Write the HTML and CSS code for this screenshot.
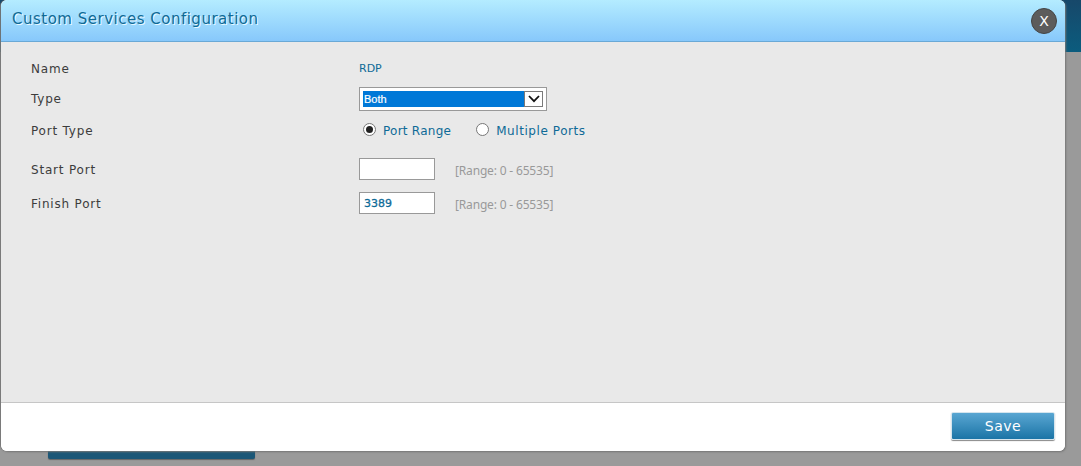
FILE: index.html
```html
<!DOCTYPE html>
<html lang="en">
<head>
<meta charset="utf-8">
<title>Custom Services Configuration</title>
<link rel="stylesheet" href="styles.css">
</head>
<body>
<div class="backdrop">
  <div class="behind-strip"></div>
  <div class="behind-button"></div>
  <div class="modal">
    <header class="modal-head">
      <h1 class="modal-title">Custom Services Configuration</h1>
      <span class="close">X</span>
    </header>
    <main class="modal-body">
      <div class="row row-name"><span class="label">Name</span><span class="value value-name">RDP</span></div>
      <div class="row row-type"><span class="label">Type</span>
        <div class="select"><span class="select-text">Both</span><span class="select-btn"><svg width="12" height="8" viewBox="0 0 12 8"><path d="M1 1l5 5.200L11 1" fill="none" stroke="#111" stroke-width="1.800"/></svg></span></div>
      </div>
      <div class="row row-port"><span class="label">Port Type</span>
        <div class="radios">
          <span class="radio radio-on"></span><span class="value radio-label radio-label-first">Port Range</span>
          <span class="radio"></span><span class="value radio-label">Multiple Ports</span>
        </div>
      </div>
      <div class="row row-start"><span class="label">Start Port</span><span class="input"></span><span class="hint">[Range: 0 - 65535]</span></div>
      <div class="row row-finish"><span class="label">Finish Port</span><span class="input">3389</span><span class="hint">[Range: 0 - 65535]</span></div>
    </main>
    <footer class="modal-foot"><button class="save" type="button">Save</button></footer>
  </div>
</div>
</body>
</html>
```
FILE: styles.css
```css
* { box-sizing: border-box; }
html, body { margin: 0; height: 100%; }
body { overflow: hidden; font-family: "DejaVu Sans", Verdana, sans-serif; }
.backdrop { position: relative; width: 1081px; height: 466px; background: #9a9a9a; }
.behind-strip { position: absolute; left: 0; right: 0; top: 0; height: 52px; background: linear-gradient(#17486a, #0b5c7e); }
.behind-button { position: absolute; left: 48px; top: 440px; width: 207px; height: 19px; background: #1b5777; border-radius: 2px; box-shadow: 0 1px 1px #666; }
.modal { position: relative; margin-left: 1px; width: 1064px; height: 451px; display: flex; flex-direction: column; background: #fff; border-radius: 6px; box-shadow: -1px 0 1px #777, 1px 1px 2px #777; overflow: hidden; }
.modal-head { height: 42px; flex: none; display: flex; align-items: center; justify-content: space-between; padding: 0 8px 0 11px; background: linear-gradient(#b4ecff, #87c8fb); border-bottom: 1px solid #6aa9d6; }
.modal-title { margin: 0 0 4px; font-size: 15px; font-weight: 400; letter-spacing: 0.5px; color: #0e6a97; text-shadow: 1px 1px 0 #e8f8ff; }
.close { width: 26px; height: 26px; border-radius: 50%; background: #5c5c5c; border: 1px solid #444; color: #fff; font-size: 14px; display: flex; align-items: center; justify-content: center; }
.modal-body { flex: 1; background: #e9e9e9; border-bottom: 1px solid #c6c6c6; padding: 0 0 0 30px; }
.row { display: flex; align-items: center; font-size: 12px; letter-spacing: 0.8px; }
.row-name { height: 18px; margin-top: 17px; }
.row-type { height: 24px; margin-top: 10px; }
.row-port { height: 18px; margin-top: 10px; }
.row-start { height: 22px; margin-top: 19px; }
.row-finish { height: 22px; margin-top: 12px; }
.label { width: 328px; flex: none; margin-top: 1px; color: #3c3c3c; }
.row-type .label { margin: 0 0 1px; }
.value { color: #0e6a97; letter-spacing: 0.57px; }
.value-name { font-size: 11px; letter-spacing: 0; }
.select { width: 188px; height: 24px; background: #fff; border: 1px solid #999; padding: 3px; display: flex; align-items: stretch; }
.select-text { flex: 1; background: #0078d7; color: #fff; font: 11px "Liberation Sans", Arial, sans-serif; letter-spacing: 0; padding-left: 1px; display: flex; align-items: center; -webkit-text-stroke: 0.2px #fff; }
.select-btn { width: 19px; background: #fff; border: 1px solid #7a7a7a; display: flex; align-items: center; justify-content: center; }
.radios { display: flex; align-items: center; padding-left: 4px; }
.radio { width: 13px; height: 13px; margin: 0 7px 2px 0; border-radius: 50%; background: #fff; border: 1px solid #777; display: flex; align-items: center; justify-content: center; }
.radio-on::before { content: ""; width: 7px; height: 7px; border-radius: 50%; background: #222; }
.radio-label { margin-top: 2px; }
.radio-label-first { margin-right: 25px; letter-spacing: 0.25px; }
.input { width: 76px; height: 22px; flex: none; background: #fff; border: 1px solid #999; padding-left: 4px; display: flex; align-items: center; color: #0e6a97; font-size: 11px; letter-spacing: 0; -webkit-text-stroke: 0.3px #0e6a97; }
.hint { margin: 3px 0 0 20px; color: #999; font-family: "Noto Sans", sans-serif; font-size: 12px; letter-spacing: -0.17px; }
.modal-foot { height: 48px; flex: none; display: flex; align-items: flex-start; justify-content: flex-end; padding: 9px 10px 0 0; background: #fff; }
.save { width: 104px; height: 28px; padding: 0; border: 1px solid #d5e5ee; border-radius: 2px; background: linear-gradient(#59a6d2, #1b74a6); color: #fff; font: 14px "DejaVu Sans", sans-serif; letter-spacing: 0.5px; box-shadow: 0 1px 1px #888; }
```
